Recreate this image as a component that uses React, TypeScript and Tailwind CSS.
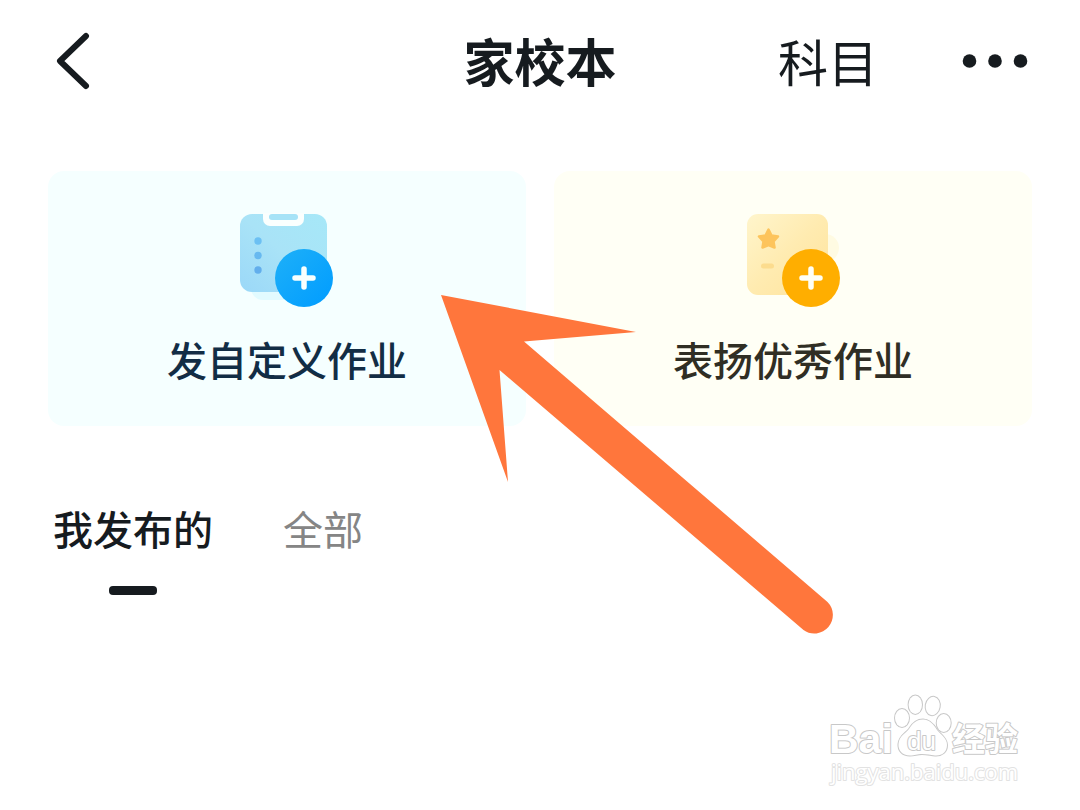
import React, { useState } from 'react';

type TabType = 'MINE' | 'ALL';

const TABS: { id: TabType; label: string }[] = [
  { id: 'MINE', label: '我发布的' },
  { id: 'ALL', label: '全部' },
];

const HomeworkIcon: React.FC = () => (
  <svg width="96" height="104" viewBox="0 0 96 104" fill="none" aria-hidden="true">
    <defs>
      <linearGradient id="hw-sheet" x1="0" y1="1" x2="1" y2="0">
        <stop offset="0" stopColor="#9bd8f8" />
        <stop offset="0.5" stopColor="#a9e3f7" />
        <stop offset="1" stopColor="#a6e8f8" />
      </linearGradient>
      <linearGradient id="hw-badge" x1="0" y1="0" x2="1" y2="1">
        <stop offset="0" stopColor="#1eb0f8" />
        <stop offset="1" stopColor="#009cff" />
      </linearGradient>
    </defs>
    <rect x="12" y="70" width="50" height="24" rx="12" fill="#e2fbff" />
    <rect x="1" y="8" width="87" height="78" rx="12" fill="url(#hw-sheet)" />
    <path d="M24 7H65V13a7 7 0 0 1-7 7H31a7 7 0 0 1-7-7Z" fill="#fafffe" />
    <rect x="30" y="8" width="29" height="6" rx="3" fill="#a6e3f7" />
    <circle cx="19" cy="35" r="3.7" fill="#6cc0f3" />
    <circle cx="19" cy="49.5" r="3.7" fill="#67b9f0" />
    <circle cx="19" cy="64" r="3.7" fill="#62aeec" />
    <circle cx="65" cy="72" r="29" fill="url(#hw-badge)" />
    <path d="M65 63V81M56 72H74" stroke="#f8fffe" strokeWidth="5.5" strokeLinecap="round" />
  </svg>
);

const PraiseIcon: React.FC = () => (
  <svg width="96" height="104" viewBox="0 0 96 104" fill="none" aria-hidden="true">
    <defs>
      <linearGradient id="pr-sheet" x1="0" y1="0" x2="1" y2="1">
        <stop offset="0" stopColor="#fff5cc" />
        <stop offset="0.5" stopColor="#ffebb0" />
        <stop offset="1" stopColor="#ffe39c" />
      </linearGradient>
    </defs>
    <circle cx="80" cy="42" r="14" fill="#fffbe2" />
    <rect x="2" y="8" width="81" height="81" rx="11" fill="url(#pr-sheet)" />
    <path
      d="M23.5 23.5L26.5 29.5L33 30.5L28.5 35.5L29.5 41.5L23.5 39L17.5 41.5L18.5 35.5L14 30.5L20.5 29.5Z"
      fill="#fdc45c"
      stroke="#fdc45c"
      strokeWidth="2.5"
      strokeLinejoin="round"
    />
    <rect x="16" y="57.5" width="13" height="5" rx="2.5" fill="#fcdc8e" />
    <circle cx="66" cy="72" r="29" fill="#ffae00" />
    <path d="M66 63V81M57 72H75" stroke="#fffff5" strokeWidth="5.5" strokeLinecap="round" />
  </svg>
);

const PointerArrow: React.FC = () => (
  <svg
    className="absolute left-[441px] top-[295px] pointer-events-none"
    width="393"
    height="340"
    viewBox="441 295 393 340"
    aria-hidden="true"
  >
    <path
      d="M441 295L636 332L524 341.5L827.5 602A18.5 18.5 0 0 1 803.5 630L499.5 370L508 482Z"
      fill="#ff763c"
    />
  </svg>
);

const Watermark: React.FC = () => (
  <svg
    className="absolute right-[52px] bottom-5 pointer-events-none"
    width="204"
    height="100"
    viewBox="824 690 204 100"
    fill="#ffffff"
    stroke="#c8c8c8"
    strokeWidth="2"
    strokeLinejoin="round"
    paintOrder="stroke"
  >
    <text x="829" y="753" fontSize="41" fontWeight="700" className="font-['Liberation_Sans',sans-serif]">Bai</text>
    <ellipse cx="902" cy="718" rx="7" ry="9" />
    <ellipse cx="915.3" cy="704.7" rx="6.7" ry="9.2" />
    <ellipse cx="932.7" cy="706" rx="7" ry="9.2" transform="rotate(10 932.7 706)" />
    <ellipse cx="943.7" cy="723" rx="7" ry="9" />
    <path d="M923 719.5C930 719.5 934 725 937 730C941 735 947 738 947 745C947 752 942 756 935 755.5C930 755 927 754 922 754C917 754 915 755.5 910 755.5C902 755.5 898 750 898.5 744C899 736 906 733 909 729C912 724 916 719.5 923 719.5Z" />
    <text x="907" y="750" fontSize="26" className="font-['Liberation_Sans',sans-serif]">du</text>
    <text x="952" y="751" fontSize="33" fontWeight="700" className="font-['Noto_Sans_CJK_SC',sans-serif]">经验</text>
    <text x="831" y="780" fontSize="22" stroke="#e2e2e2" className="font-['Open_Sans',sans-serif]">jingyan.baidu.com</text>
  </svg>
);

const App: React.FC = () => {
  const [activeTab, setActiveTab] = useState<TabType>('MINE');

  return (
    <div className="relative min-h-screen bg-white text-[#161b1f] font-['Noto_Sans_CJK_SC',sans-serif]">
      <header className="grid grid-cols-[1fr_auto_1fr] items-center h-30 px-12">
        <button aria-label="返回" className="justify-self-start pl-2">
          <svg width="36" height="60" viewBox="0 0 36 60" fill="none" stroke="currentColor" strokeWidth="6" strokeLinecap="round" strokeLinejoin="round">
            <path d="M30 6L4 31L30 56" />
          </svg>
        </button>
        <h1 className="text-[51px] leading-[64px] font-bold">家校本</h1>
        <div className="flex items-center justify-end gap-[84px]">
          <button className="text-[50px] leading-[64px]">科目</button>
          <button aria-label="更多" className="pr-1">
            <svg width="66" height="16" viewBox="0 0 66 16" fill="currentColor">
              <circle cx="7.5" cy="9" r="6.8" />
              <circle cx="33" cy="9" r="6.8" />
              <circle cx="58.5" cy="9" r="6.8" />
            </svg>
          </button>
        </div>
      </header>

      <main className="px-12 pt-[51px]">
        <div className="grid grid-cols-2 gap-7">
          <button className="flex flex-col items-center gap-[21px] pt-[35px] pb-[39px] rounded-2xl bg-[#f5ffff] text-[#122d45]">
            <HomeworkIcon />
            <span className="text-[40px] leading-[56px] font-medium">发自定义作业</span>
          </button>
          <button className="flex flex-col items-center gap-[21px] pt-[35px] pb-[39px] rounded-2xl bg-[#fffff5] text-[#302e24]">
            <PraiseIcon />
            <span className="text-[40px] leading-[56px] font-medium">表扬优秀作业</span>
          </button>
        </div>

        <nav className="flex gap-[70px] pt-[74px] pl-[5px]">
          {TABS.map(t => (
            <button
              key={t.id}
              onClick={() => setActiveTab(t.id)}
              className={`flex flex-col items-center gap-[30px] text-[40px] leading-[56px] ${activeTab === t.id ? 'font-medium' : 'text-[#858585]'}`}
            >
              {t.label}
              {activeTab === t.id && <span className="w-12 h-[9px] rounded-sm bg-[#161b1f]"></span>}
            </button>
          ))}
        </nav>
      </main>

      <PointerArrow />
      <Watermark />
    </div>
  );
};

export default App;
